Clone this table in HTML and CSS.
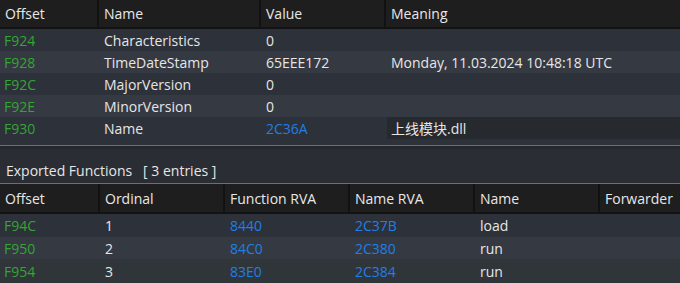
FILE: index.html
```html
<!DOCTYPE html>
<html>
<head>
<meta charset="utf-8">
<link rel="stylesheet" href="styles.css">
</head>
<body>
<div class="app">
  <div class="grid top">
    <div class="hd">Offset</div><div class="hd">Name</div><div class="hd">Value</div><div class="hd last">Meaning</div>
    <div class="c off r1">F924</div><div class="c r1">Characteristics</div><div class="c r1">0</div><div class="c r1"></div>
    <div class="c off r2">F928</div><div class="c r2">TimeDateStamp</div><div class="c r2">65EEE172</div><div class="c r2">Monday, 11.03.2024 10:48:18 UTC</div>
    <div class="c off r1">F92C</div><div class="c r1">MajorVersion</div><div class="c r1">0</div><div class="c r1"></div>
    <div class="c off r2">F92E</div><div class="c r2">MinorVersion</div><div class="c r2">0</div><div class="c r2"></div>
    <div class="c off r1">F930</div><div class="c r1">Name</div><div class="c r1 rva">2C36A</div><div class="c r1 edit"><span class="editbox">上线模块.dll</span></div>
  </div>
  <div class="gap"></div>
  <div class="section">Exported Functions&nbsp;&nbsp;&nbsp;[ 3 entries ]</div>
  <div class="grid bottom">
    <div class="hd">Offset</div><div class="hd">Ordinal</div><div class="hd">Function RVA</div><div class="hd">Name RVA</div><div class="hd">Name</div><div class="hd last">Forwarder</div>
    <div class="c off r1">F94C</div><div class="c r1">1</div><div class="c r1 rva">8440</div><div class="c r1 rva">2C37B</div><div class="c r1">load</div><div class="c r1"></div>
    <div class="c off r2">F950</div><div class="c r2">2</div><div class="c r2 rva">84C0</div><div class="c r2 rva">2C380</div><div class="c r2">run</div><div class="c r2"></div>
    <div class="c off r3">F954</div><div class="c r3">3</div><div class="c r3 rva">83E0</div><div class="c r3 rva">2C384</div><div class="c r3">run</div><div class="c r3"></div>
  </div>
</div>
</body>
</html>
```
FILE: styles.css
```css
html, body {
  margin: 0;
  padding: 0;
  background: #2a2e35;
}
body {
  font-family: "Open Sans", "Noto Sans CJK SC", sans-serif;
  font-size: 14px;
  color: #e6e6e6;
  width: 680px;
  height: 283px;
  overflow: hidden;
}
.app {
  display: flex;
  flex-direction: column;
}
.grid {
  display: grid;
}
.top {
  grid-template-columns: 99px 162px 125px 1fr;
  grid-template-rows: 29px repeat(5, 22px);
}
.bottom {
  grid-template-columns: 100px 125px 125px 125px 125px 1fr;
  grid-template-rows: 30px 23px 22px 24px;
}
.hd {
  background: #1e1e1e;
  border-right: 2px solid #121212;
  border-bottom: 2px solid #121212;
  padding-left: 5px;
  display: flex;
  align-items: center;
  color: #e8e8e8;
  white-space: nowrap;
}
.hd.last {
  border-right: none;
}
.c {
  padding-left: 5px;
  display: flex;
  align-items: center;
  white-space: nowrap;
}
.c.off {
  color: #33a532;
  padding-left: 4px;
}
.rva {
  color: #1f7fe6;
}
.r1 {
  background: #2d3139;
}
.r2 {
  background: #353942;
}
.r3 {
  background: #30353a;
}
.edit {
  padding-left: 1px;
}
.editbox {
  background: #26292e;
  align-self: stretch;
  flex: 1;
  display: flex;
  align-items: center;
  padding-left: 4px;
}
.gap {
  height: 6px;
  background: #2d3139;
  border-bottom: 1px solid #6e6f72;
}
.section {
  height: 38px;
  box-sizing: border-box;
  background: #2a2d33;
  border-top: 3px solid #25282d;
  border-bottom: 1px solid #6e6f72;
  padding: 9px 0 0 6px;
  display: flex;
  align-items: center;
  color: #e6e6e6;
}
```
